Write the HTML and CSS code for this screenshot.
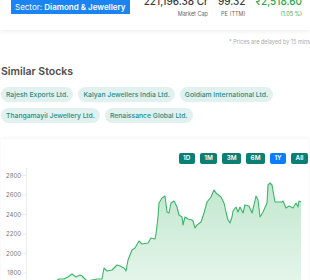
FILE: index.html
```html
<!DOCTYPE html>
<html lang="en">

<head>
    <meta charset="UTF-8">
    <meta name="viewport" content="width=device-width, initial-scale=1.0">
    <title>Stock</title>
    <link rel="stylesheet" href="styles.css">
</head>

<body>
    <div class="summary">
        <div class="sector">Sector: <b>Diamond &amp; Jewellery</b></div>
        <div class="stats">
            <div class="stat">
                <div class="value">221,196.38 Cr</div>
                <div class="label">Market Cap</div>
            </div>
            <div class="stat">
                <div class="value">99.32</div>
                <div class="label">PE (TTM)</div>
            </div>
            <div class="stat price">
                <div class="value">₹2,518.60</div>
                <div class="label">(1.05 %)</div>
            </div>
        </div>
    </div>

    <div class="delay">* Prices are delayed by 15 mins</div>

    <div class="similar">
        <h3>Similar Stocks</h3>
        <div class="chips">
            <span class="chip">Rajesh Exports Ltd.</span>
            <span class="chip">Kalyan Jewellers India Ltd.</span>
            <span class="chip">Goldiam International Ltd.</span>
            <span class="chip">Thangamayil Jewellery Ltd.</span>
            <span class="chip">Renaissance Global Ltd.</span>
        </div>
    </div>

    <div class="chart_card">
        <div class="ranges">
            <span class="range">1D</span>
            <span class="range">1M</span>
            <span class="range">3M</span>
            <span class="range">6M</span>
            <span class="range active">1Y</span>
            <span class="range">All</span>
        </div>
        <svg class="chart" width="308" height="120" viewBox="1 168 308 120">
            <defs>
                <linearGradient id="area" x1="0" y1="0" x2="0" y2="1">
                    <stop offset="0" stop-color="#3cb467" stop-opacity="0.32" />
                    <stop offset="1" stop-color="#3cb467" stop-opacity="0.1" />
                </linearGradient>
            </defs>
            <!-- axis -->
            <line x1="26.5" y1="168" x2="26.5" y2="288" stroke="#ececec" />
            <g stroke="#ececec">
                <line x1="20" y1="175.5" x2="26" y2="175.5" />
                <line x1="20" y1="195" x2="26" y2="195" />
                <line x1="20" y1="214.5" x2="26" y2="214.5" />
                <line x1="20" y1="234" x2="26" y2="234" />
                <line x1="20" y1="253.5" x2="26" y2="253.5" />
                <line x1="20" y1="273" x2="26" y2="273" />
            </g>
            <g class="ticks">
                <text x="21" y="177.5">2800</text>
                <text x="21" y="197">2600</text>
                <text x="21" y="216.5">2400</text>
                <text x="21" y="236">2200</text>
                <text x="21" y="255.5">2000</text>
                <text x="21" y="275">1800</text>
            </g>
            <path fill="url(#area)" d="M26,300 L40,295 50,285 59,279 64,279 68,277 72,274 76,277 80,275 82,276 87,281 92,280 97,279 102,279 104,268 107,271 112,270 117,265 120,266 124,268 126,271 128,260 132,250 135,248 139,241 142,244 148,243 151,238 155,239 156,234 158,217 159,203 162,198 165,196 167,212 169,213 171,203 174,201 177,207 179,215 182,217 183,225 185,217 188,219 192,220 193,221 195,228 197,225 201,222 204,213 207,202 211,197 214,190 216,193 221,197 224,203 226,212 228,220 230,223 232,217 233,211 236,207 238,212 240,207 243,213 245,205 249,206 252,213 254,205 256,196 258,200 260,217 263,212 267,203 268,185 270,183 272,185 275,202 278,202 282,202 283,201 286,208 289,206 293,208 296,203 298,207 299,201 301,202 L301,300 Z" />
            <path fill="none" stroke="#3db468" stroke-width="1.1" stroke-linejoin="round" d="M26,300 L40,295 50,285 59,279 64,279 68,277 72,274 76,277 80,275 82,276 87,281 92,280 97,279 102,279 104,268 107,271 112,270 117,265 120,266 124,268 126,271 128,260 132,250 135,248 139,241 142,244 148,243 151,238 155,239 156,234 158,217 159,203 162,198 165,196 167,212 169,213 171,203 174,201 177,207 179,215 182,217 183,225 185,217 188,219 192,220 193,221 195,228 197,225 201,222 204,213 207,202 211,197 214,190 216,193 221,197 224,203 226,212 228,220 230,223 232,217 233,211 236,207 238,212 240,207 243,213 245,205 249,206 252,213 254,205 256,196 258,200 260,217 263,212 267,203 268,185 270,183 272,185 275,202 278,202 282,202 283,201 286,208 289,206 293,208 296,203 298,207 299,201 301,202" />
        </svg>
    </div>
</body>

</html>
```
FILE: styles.css
```css
body {
    margin: 0;
    font-family: Inter, "Noto Sans", sans-serif;
    color: #333;
    overflow: hidden;
}

.summary {
    margin-top: -12px;
    height: 42px;
    box-sizing: border-box;
    padding: 7px 8px 0 11px;
    display: flex;
    justify-content: space-between;
    align-items: flex-start;
    background: #fff;
    box-shadow: 0 2px 4px rgba(0, 0, 0, 0.06);
}

.sector {
    padding: 7px 4px 2px;
    line-height: 10px;
    background-color: #1a84f2;
    color: #fff;
    font-size: 8px;
    white-space: nowrap;
}

.sector b {
    font-weight: 600;
}

.stats {
    display: flex;
    gap: 10px;
    white-space: nowrap;
}

.stat {
    text-align: right;
}

.stat .value {
    font-size: 10px;
    line-height: 12px;
    font-weight: 500;
    color: #3a3a3a;
}

.stat .label {
    margin-top: 3px;
    font-size: 5.5px;
    line-height: 8px;
    color: #666;
}

.price .value,
.price .label {
    color: #2aa94a;
}

.delay {
    margin: 9px 0 0 229px;
    white-space: nowrap;
    font-size: 5.5px;
    color: #aaa;
}

.similar {
    padding: 0 1px;
}

.similar h3 {
    margin: 20px 0 8px;
    font-size: 10.5px;
    line-height: 14px;
    font-weight: 600;
    color: #4d4d4d;
}

.chips {
    display: flex;
    flex-wrap: wrap;
    gap: 6px 5px;
}

.chip {
    height: 15px;
    line-height: 15px;
    padding: 0 5px;
    border-radius: 8px;
    background-color: #e0f1f0;
    color: #2a8c82;
    font-size: 6.8px;
    font-weight: 500;
}

.chart_card {
    margin: 16px 1px 0;
    padding-top: 14px;
    background: #fff;
    box-shadow: 0 -1px 4px rgba(0, 0, 0, 0.05);
}

.ranges {
    display: flex;
    justify-content: flex-end;
    gap: 5px;
    padding-right: 1px;
}

.range {
    height: 11px;
    line-height: 11px;
    padding: 0 4.5px;
    border-radius: 2px;
    background-color: #0c7f74;
    color: #fff;
    font-size: 6.3px;
    font-weight: 600;
}

.range.active {
    background-color: #0a7cff;
}

.chart {
    display: block;
    margin-top: 4px;
}

.ticks text {
    font-size: 6px;
    fill: #777;
    text-anchor: end;
}
```
